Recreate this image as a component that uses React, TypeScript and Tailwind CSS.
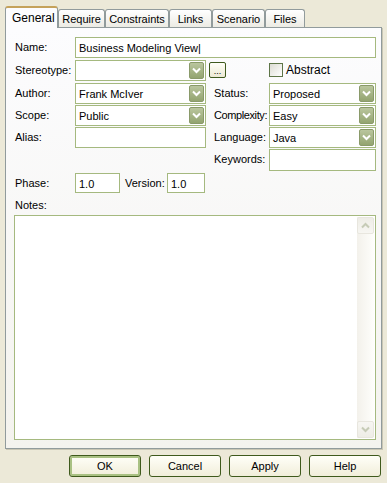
import React from "react";

const tabs = ["General", "Require", "Constraints", "Links", "Scenario", "Files"];
const tabWidths = ["w-[53px]", "w-[47px]", "w-[64px]", "w-[43px]", "w-[53px]", "w-[40px]"];

const Chevron = ({ color = "#fff" }: { color?: string }) => (
  <svg width="9" height="7" viewBox="0 0 9 7">
    <path d="M1 1.5 L4.5 5 L8 1.5" fill="none" stroke={color} strokeWidth="2" />
  </svg>
);

const Label = ({ text, w, tight }: { text: string; w: string; tight?: boolean }) => (
  <div className={`${w} shrink-0 whitespace-nowrap pt-[3px] leading-[14px] ${tight ? "tracking-[-0.4px]" : ""}`}>
    {text}
  </div>
);

const TextBox = ({ value, w, h = "h-[21px]" }: { value?: string; w: string; h?: string }) => (
  <div className={`${w} ${h} shrink-0 border border-[#A5B97F] bg-white px-[3px] pt-[3px] leading-[14px]`}>
    {value}
  </div>
);

const Combo = ({ value, w }: { value?: string; w: string }) => (
  <div className={`${w} h-[21px] shrink-0 flex items-center border border-[#A5B97F] bg-white pl-[3px] pr-px`}>
    <span className="flex-1 leading-[14px]">{value}</span>
    <div className="w-[15px] h-[17px] rounded-[2px] border border-[#8A9A6A] bg-linear-to-b from-[#BAC69E] to-[#93A470] flex items-center justify-center">
      <Chevron />
    </div>
  </div>
);

const Button = ({ text, def }: { text: string; def?: boolean }) => (
  <div
    className={`w-[72px] h-[22px] rounded-[3px] border border-[#3F5A1D] bg-linear-to-b from-[#FFFFF8] to-[#F1EEDA] flex items-center justify-center ${
      def ? "shadow-[inset_0_0_0_2px_#A9C183]" : ""
    }`}
  >
    {text}
  </div>
);

export default function App() {
  return (
    <div
      className="w-[387px] h-[483px] bg-[#ECE9D8] pt-[5px] pl-[5px] text-[11px] text-black"
      style={{ fontFamily: '"Liberation Sans", Arial, sans-serif' }}
    >
      {/* tab strip */}
      <div className="flex items-end h-[22px]">
        {tabs.map((t, i) =>
          i === 0 ? (
            <div
              key={t}
              className={`${tabWidths[i]} h-[22px] -mb-px relative z-10 rounded-t-[3px] border-x border-[#919B9C] border-t-2 border-t-[#C5A25A] bg-[#FCFCFE] pl-[6px] pt-[3px] leading-[14px] text-[12px]`}
            >
              {t}
            </div>
          ) : (
            <div
              key={t}
              className={`${tabWidths[i]} h-[18px] rounded-t-[3px] border border-b-0 border-[#919B9C] bg-linear-to-b from-[#FFFFFF] to-[#ECEBE4] text-center pt-[2px] leading-[14px]`}
            >
              {t}
            </div>
          )
        )}
      </div>

      {/* panel */}
      <div className="w-[377px] h-[422px] border border-[#919B9C] shadow-[1px_1px_0_#C9C6B4] bg-linear-to-b from-[#FCFCFE] to-[#F4F3EE] pl-[9px] pt-[9px]">
        <div className="flex">
          <Label text="Name:" w="w-[60px]" />
          <TextBox value="Business Modeling View|" w="w-[301px]" />
        </div>

        <div className="flex mt-[2px]">
          <Label text="Stereotype:" w="w-[60px]" />
          <Combo w="w-[131px]" />
          <div className="ml-[3px] mt-[2px] w-[17px] h-[16px] rounded-[2px] border border-[#3F5A1D] bg-linear-to-b from-[#FFFFF8] to-[#ECE9D4] flex items-end justify-center text-[9px] leading-[11px]">
            ...
          </div>
          <div className="ml-[43px] mt-[3px] flex items-start">
            <div className="w-[14px] h-[14px] border border-[#5E7548] bg-linear-to-br from-[#DCDCD4] to-[#FFFFFF]" />
            <span className="ml-[3px] leading-[14px] text-[12px]">Abstract</span>
          </div>
        </div>

        <div className="flex mt-[2px]">
          <Label text="Author:" w="w-[60px]" />
          <Combo value="Frank McIver" w="w-[131px]" />
          <div className="w-[8px]" />
          <Label text="Status:" w="w-[55px]" />
          <Combo value="Proposed" w="w-[107px]" />
        </div>

        <div className="flex mt-px">
          <Label text="Scope:" w="w-[60px]" />
          <Combo value="Public" w="w-[131px]" />
          <div className="w-[8px]" />
          <Label text="Complexity:" w="w-[55px]" tight />
          <Combo value="Easy" w="w-[107px]" />
        </div>

        <div className="flex mt-px">
          <Label text="Alias:" w="w-[60px]" />
          <TextBox w="w-[131px]" />
          <div className="w-[8px]" />
          <Label text="Language:" w="w-[55px]" />
          <Combo value="Java" w="w-[107px]" />
        </div>

        <div className="flex mt-px">
          <div className="w-[199px]" />
          <Label text="Keywords:" w="w-[55px]" />
          <TextBox w="w-[107px]" h="h-[22px]" />
        </div>

        <div className="flex mt-[2px]">
          <Label text="Phase:" w="w-[60px]" />
          <TextBox value="1.0" w="w-[45px]" h="h-[20px]" />
          <div className="w-[5px]" />
          <Label text="Version:" w="w-[42px]" />
          <TextBox value="1.0" w="w-[38px]" h="h-[20px]" />
        </div>

        <div className="h-[22px] pt-[5px] leading-[14px]">Notes:</div>

        <div className="-ml-px w-[362px] h-[225px] border border-[#A5B97F] bg-white flex justify-end p-px">
          <div className="w-[17px] h-full flex flex-col justify-between bg-linear-to-r from-[#F3F1EB] to-[#FEFEFB]">
            <div className="h-[17px] rounded-[2px] border border-[#E8E6DE] bg-linear-to-b from-[#F7F6F2] to-[#EEEDE6] flex items-center justify-center rotate-180">
              <Chevron color="#C6CBB6" />
            </div>
            <div className="h-[17px] rounded-[2px] border border-[#E8E6DE] bg-linear-to-b from-[#F7F6F2] to-[#EEEDE6] flex items-center justify-center">
              <Chevron color="#C6CBB6" />
            </div>
          </div>
        </div>
      </div>

      {/* buttons */}
      <div className="flex gap-[8px] ml-[64px] mt-[6px]">
        <Button text="OK" def />
        <Button text="Cancel" />
        <Button text="Apply" />
        <Button text="Help" />
      </div>
    </div>
  );
}
